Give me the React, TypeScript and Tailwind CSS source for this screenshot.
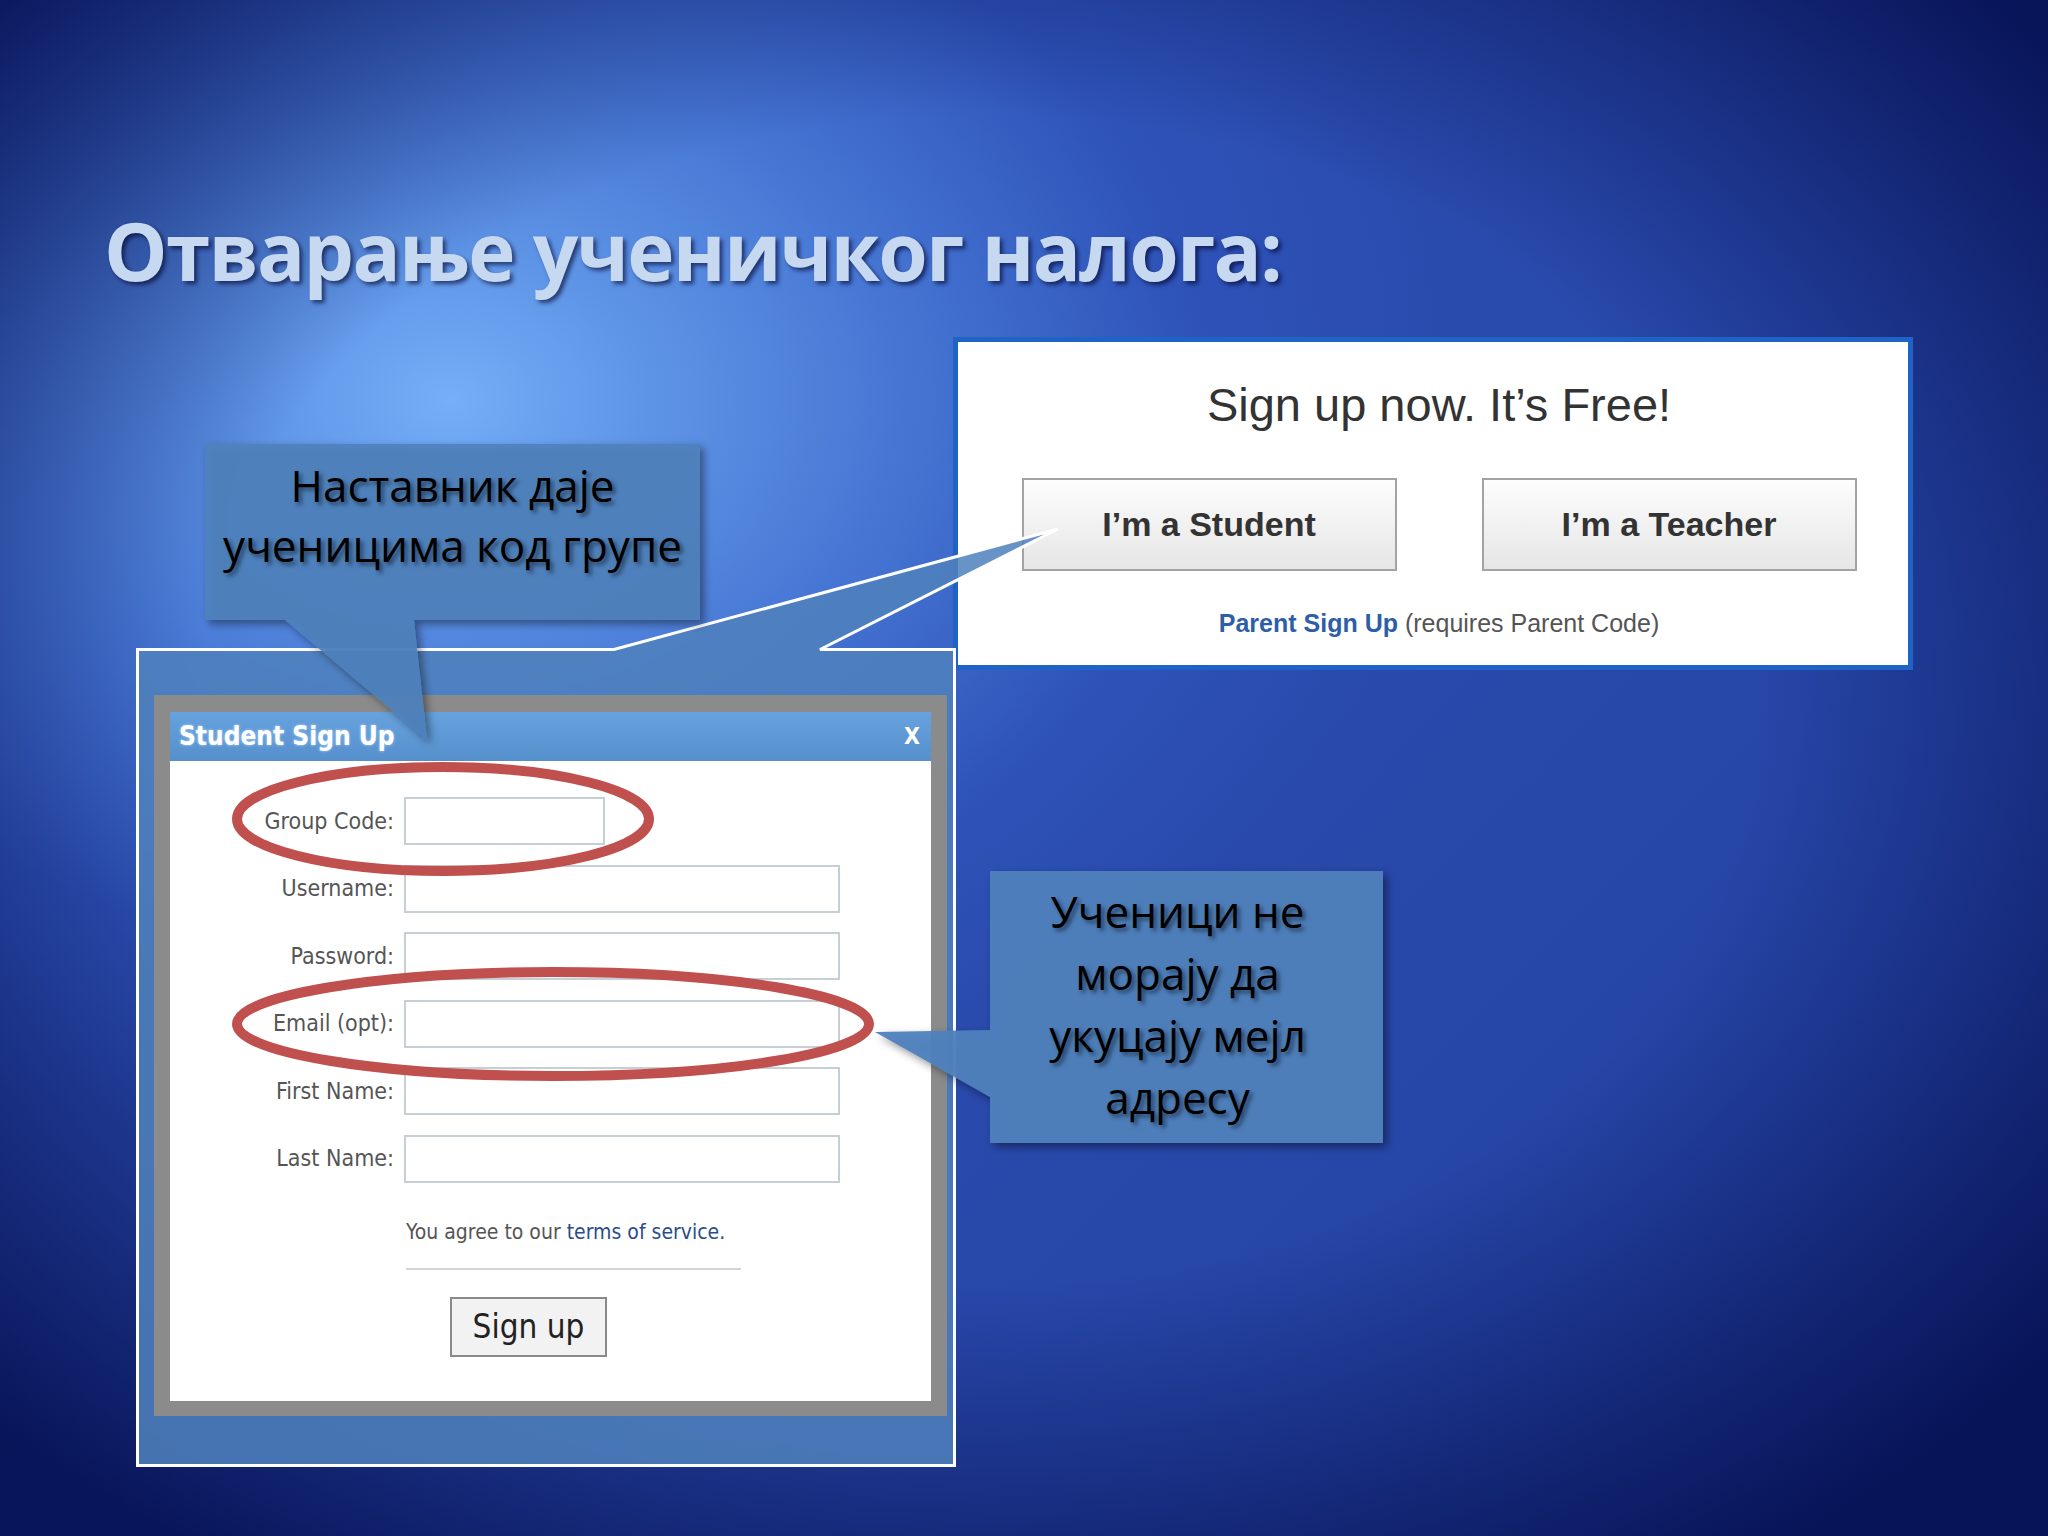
export default function App() {
  const rows: { label: string; w: string }[] = [
    { label: "Group Code:", w: "w-[201px]" },
    { label: "Username:", w: "w-[436px]" },
    { label: "Password:", w: "w-[436px]" },
    { label: "Email (opt):", w: "w-[436px]" },
    { label: "First Name:", w: "w-[436px]" },
    { label: "Last Name:", w: "w-[436px]" },
  ];
  return (
    <div className="relative w-[2048px] h-[1536px] overflow-hidden [background-image:radial-gradient(ellipse_1200px_900px_at_980px_700px,rgba(5,15,80,0)_65%,rgba(5,15,80,0.45)_90%,rgba(5,15,80,0.9)_115%),radial-gradient(ellipse_1000px_760px_at_450px_400px,#76aef8_0%,#5e94e6_20%,#4676d4_45%,rgba(50,90,195,0.45)_75%,rgba(50,90,195,0)_100%),linear-gradient(135deg,#2d50b4_0%,#2a4bae_50%,#22409f_100%)]">
      {/* Title */}
      <h1 className="absolute left-[104px] top-[210px] m-0 whitespace-nowrap text-[80px] leading-none font-bold tracking-[-0.022em] text-[#c6d9f1] font-['Open_Sans',sans-serif] [text-shadow:3px_3px_4px_rgba(0,0,40,0.6)]">
        Отварање ученичког налога:
      </h1>

      {/* Sign up now box */}
      <div className="absolute left-[953px] top-[337px] w-[960px] h-[333px] border-[5px] border-[#1f63c6] bg-white flex flex-col items-center pt-[39px] pl-[12px] font-['Liberation_Sans',Arial,sans-serif]">
        <div className="text-[47px] leading-none text-[#333]">Sign up now. It’s Free!</div>
        <div className="mt-[50px] flex gap-[85px]">
          <div className="w-[375px] h-[93px] border-2 border-[#a3a3a3] bg-linear-to-b from-[#fdfdfd] to-[#e6e6e6] flex items-center justify-center text-[34px] font-bold text-[#333]">
            I’m a Student
          </div>
          <div className="w-[375px] h-[93px] border-2 border-[#a3a3a3] bg-linear-to-b from-[#fdfdfd] to-[#e6e6e6] flex items-center justify-center text-[34px] font-bold text-[#333]">
            I’m a Teacher
          </div>
        </div>
        <div className="mt-[40px] text-[25px] leading-none whitespace-nowrap">
          <span className="font-bold text-[#2e5ea8]">Parent Sign Up</span>{" "}
          <span className="text-[#555]">(requires Parent Code)</span>
        </div>
      </div>

      {/* Zoom callout rectangle */}
      <svg className="absolute left-0 top-0" width="2048" height="1536" viewBox="0 0 2048 1536">
        <path
          d="M137.5 649.5 L614 649.5 L1058 529 L820 649.5 L954.5 649.5 L954.5 1465.5 L137.5 1465.5 Z"
          fill="rgba(79,129,189,0.86)"
          stroke="#ffffff"
          strokeWidth="3"
        />
      </svg>

      {/* Student Sign Up dialog */}
      <div className="absolute left-[154px] top-[695px] w-[793px] h-[721px] bg-[#8b8b8b] px-[16px] pt-[17px] pb-[15px] flex flex-col font-['DejaVu_Sans_Condensed','DejaVu_Sans',sans-serif]">
        <div className="h-[49px] shrink-0 bg-linear-to-b from-[#66a2de] to-[#5690cc] flex items-center justify-between pl-[9px] pr-[11px] text-white font-bold">
          <span className="text-[26px] [text-shadow:0_0_3px_rgba(190,225,255,0.9)]">Student Sign Up</span>
          <span className="text-[23px]">X</span>
        </div>
        <div className="flex-1 bg-white flex flex-col">
          <div className="flex flex-col gap-[19.6px] pt-[36px]">
            {rows.map((r) => (
              <div key={r.label} className="flex items-center h-[48px]">
                <div className="w-[224px] text-right text-[23px] text-[#555] leading-none">{r.label}</div>
                <div className={`ml-[10px] h-[48px] ${r.w} border-2 border-[#c6ced6] bg-white`} />
              </div>
            ))}
          </div>
          <div className="ml-[236px] mt-[39px] text-[21px] leading-none text-[#555] whitespace-nowrap">
            You agree to our <span className="text-[#2b4d8a]">terms of service.</span>
          </div>
          <div className="ml-[236px] mt-[25px] w-[335px] h-[2px] bg-[#d4d4d4]" />
          <div className="ml-[280px] mt-[27px] w-[157px] h-[60px] border-2 border-[#8a8a8a] bg-[#f2f2f2] flex items-center justify-center text-[33px] text-[#222]">
            Sign up
          </div>
        </div>
      </div>

      {/* Ellipses and callout shapes */}
      <svg className="absolute left-0 top-0" width="2048" height="1536" viewBox="0 0 2048 1536">
        <defs>
          <filter id="sh" x="-10%" y="-10%" width="130%" height="130%">
            <feDropShadow dx="4" dy="4" stdDeviation="4" floodColor="#000" floodOpacity="0.45" />
          </filter>
        </defs>
        <ellipse cx="443" cy="819" rx="206" ry="52" fill="none" stroke="#c0504d" strokeWidth="10" />
        <ellipse cx="553" cy="1024" rx="316" ry="52" fill="none" stroke="#c0504d" strokeWidth="10" />
        <path d="M205 444 H700 V620 H414 L427 740 L285 620 H205 Z" fill="rgba(79,129,189,0.92)" filter="url(#sh)" />
        <path d="M990 871 H1383 V1143 H990 V1097 L875 1032 L990 1030 Z" fill="rgba(79,129,189,0.95)" filter="url(#sh)" />
      </svg>

      {/* Callout texts */}
      <div className="absolute left-[205px] top-[444px] w-[495px] pt-[11px] text-center text-[44px] leading-[60px] text-black font-['Open_Sans',sans-serif] [text-shadow:3px_3px_4px_rgba(0,0,0,0.5)]">
        <div>Наставник даје</div>
        <div>ученицима код групе</div>
      </div>
      <div className="absolute left-[990px] top-[871px] w-[393px] pt-[9px] pr-[18px] text-center text-[44px] leading-[62px] text-black font-['Open_Sans',sans-serif] [text-shadow:3px_3px_4px_rgba(0,0,0,0.5)]">
        <div>Ученици не</div>
        <div>морају да</div>
        <div>укуцају мејл</div>
        <div>адресу</div>
      </div>
    </div>
  );
}
